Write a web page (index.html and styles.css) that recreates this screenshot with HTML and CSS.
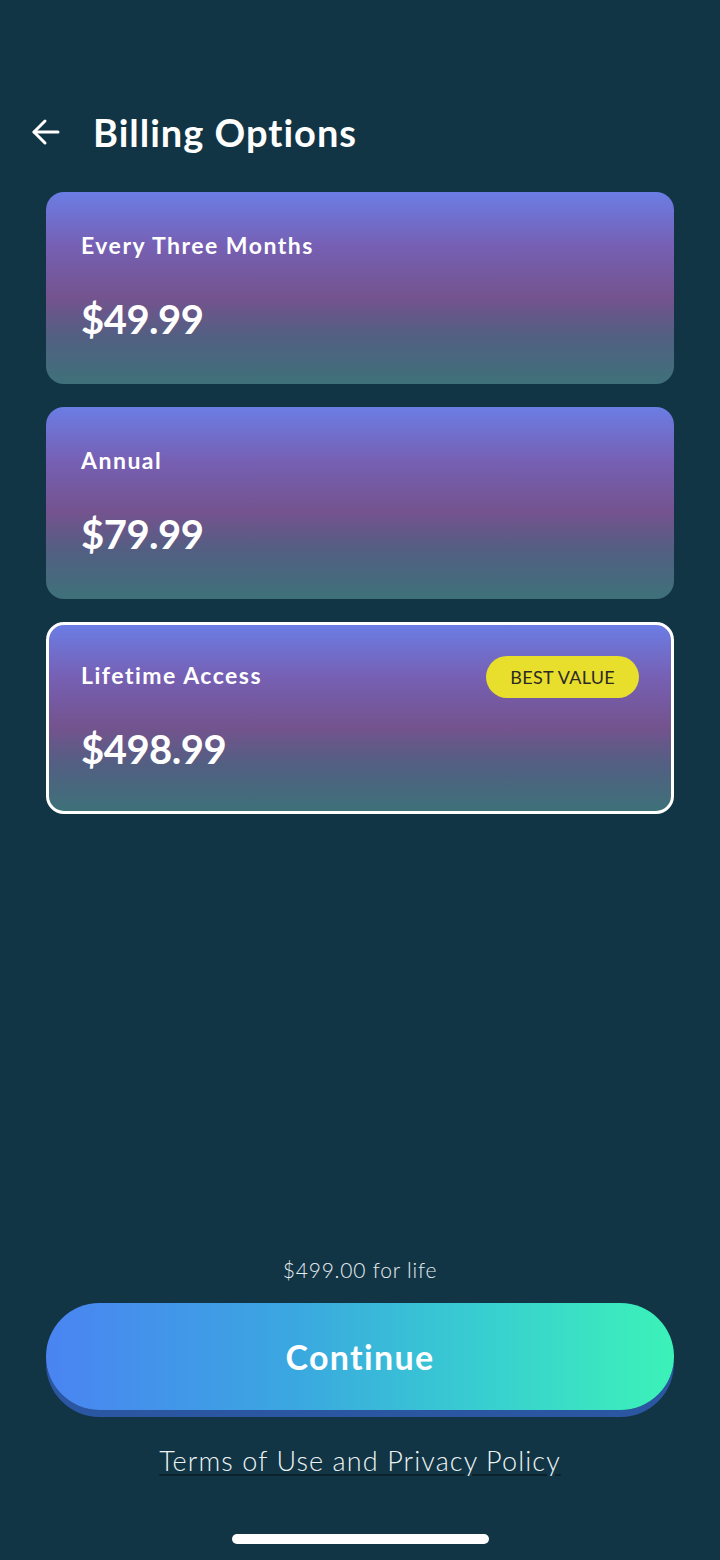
FILE: index.html
```html
<!DOCTYPE html>
<html lang="en">
<head>
<meta charset="UTF-8">
<meta name="viewport" content="width=device-width, initial-scale=1.0">
<link rel="stylesheet" href="styles.css">
</head>
<body>

<div class="screen">
  <!-- Top bar with back arrow -->
  <div class="header">
    <a href="#" class="back-button">
      <svg width="32" height="32" viewBox="0 0 32 32" fill="none" stroke="#fff" stroke-width="3" stroke-linecap="round" stroke-linejoin="round">
        <path d="M28 16H4"/>
        <path d="M15 5L4 16l11 11"/>
      </svg>
    </a>
    <h1>Billing Options</h1>
  </div>

  <!-- Plan cards -->
  <div class="plans">
    <div class="plan">
      <div class="plan-top">
        <span class="plan-name">Every Three Months</span>
      </div>
      <div class="plan-price">$49.99</div>
    </div>
    <div class="plan">
      <div class="plan-top">
        <span class="plan-name">Annual</span>
      </div>
      <div class="plan-price">$79.99</div>
    </div>
    <div class="plan selected">
      <div class="plan-top">
        <span class="plan-name">Lifetime Access</span>
        <span class="badge">BEST VALUE</span>
      </div>
      <div class="plan-price">$498.99</div>
    </div>
  </div>

  <div class="spacer"></div>

  <!-- Bottom actions -->
  <div class="footer">
    <div class="summary">$499.00 for life</div>
    <button type="button" class="continue-button">Continue</button>
    <a href="#" class="terms">Terms of Use and Privacy Policy</a>
    <div class="home-bar"></div>
  </div>
</div>

</body>
</html>
```

FILE: styles.css
```css
body {
  margin: 0;
  padding: 0;
  background-color: #123545;
  font-family: Lato, "Noto Sans", sans-serif;
  color: #fff;
}
.screen {
  height: 1560px;
  display: flex;
  flex-direction: column;
  box-sizing: border-box;
}
.header {
  display: flex;
  align-items: center;
  height: 52px;
  margin-top: 106px;
  padding-left: 30px;
}
.back-button {
  display: flex;
  width: 32px;
  height: 32px;
  margin-right: 31px;
}
h1 {
  margin: 0;
  font-size: 38px;
  font-weight: 700;
  letter-spacing: 1px;
}
.plans {
  display: flex;
  flex-direction: column;
  gap: 23px;
  margin: 34px 46px 0 46px;
}
.plan {
  height: 192px;
  box-sizing: border-box;
  padding: 33px 35px 0 35px;
  border-radius: 18px;
  background: linear-gradient(180deg, #6b7de4 0%, #7660b4 28%, #74538e 55%, #525f82 75%, #3e7179 100%);
}
.plan.selected {
  border: 3px solid #fff;
  padding: 30px 32px 0 32px;
}
.plan-top {
  display: flex;
  justify-content: space-between;
  align-items: center;
  height: 40px;
}
.plan-name {
  font-size: 23px;
  font-weight: 700;
  letter-spacing: 1.5px;
}
.badge {
  display: flex;
  align-items: center;
  height: 42px;
  padding: 0 24px;
  border-radius: 21px;
  background-color: #e8de2c;
  color: #2d2a26;
  font-size: 18px;
  font-weight: 400;
  letter-spacing: 0.3px;
  margin-top: 4px;
}
.plan-price {
  margin-top: 30px;
  font-size: 40px;
  font-weight: 700;
  letter-spacing: -0.5px;
}
.spacer {
  flex: 1;
}
.footer {
  display: flex;
  flex-direction: column;
  align-items: center;
  padding-bottom: 16px;
}
.summary {
  font-size: 21px;
  font-weight: 300;
  letter-spacing: 0.8px;
  color: #e6eef2;
  margin-bottom: 21px;
}
.continue-button {
  width: 628px;
  height: 107px;
  border: none;
  border-radius: 54px;
  background: linear-gradient(90deg, #4a84f2 0%, #3aa8e0 40%, #38cfd0 70%, #3cf2b8 100%);
  box-shadow: 0 7px 0 #2a56a2;
  color: #fff;
  font-family: Lato, "Noto Sans", sans-serif;
  font-size: 34px;
  font-weight: 700;
  letter-spacing: 1.3px;
  cursor: pointer;
}
.terms {
  margin-top: 34px;
  font-size: 27px;
  font-weight: 300;
  letter-spacing: 1.1px;
  color: #eef4f4;
  text-decoration: underline;
  text-decoration-color: rgba(0, 0, 0, 0.35);
  text-underline-offset: 3px;
}
.home-bar {
  width: 257px;
  height: 10px;
  border-radius: 5px;
  background-color: #fff;
  margin-top: 57px;
}
```
